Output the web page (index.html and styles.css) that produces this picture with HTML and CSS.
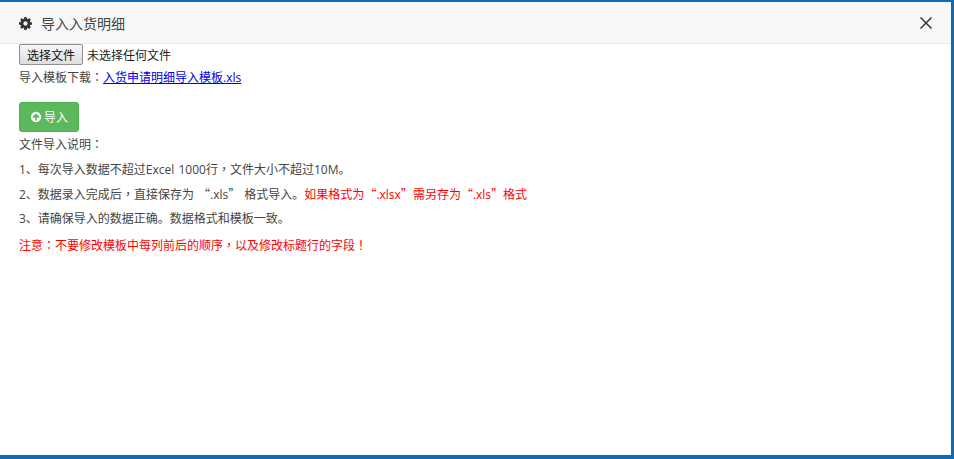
FILE: index.html
```html
<!DOCTYPE html>
<html>
<head>
<meta http-equiv="Content-Type" content="text/html; charset=utf-8">
<title>导入入货明细</title>
<link rel="stylesheet" href="styles.css">
</head>
<body>
<div class="modal">
    <div class="modal-header">
        <svg class="icon-cog" viewBox="0 0 1792 1792"><path fill="#333" d="M1152 896q0-106-75-181t-181-75-181 75-75 181 75 181 181 75 181-75 75-181zm512-109v222q0 12-8 23t-20 13l-185 28q-19 54-39 91 35 50 107 138 10 12 10 25t-9 23q-27 37-99 108t-94 71q-12 0-26-9l-138-108q-44 23-91 38-16 136-29 186-7 28-36 28h-222q-14 0-24.500-8.500t-11.500-21.500l-28-184q-49-16-90-37l-141 107q-10 9-25 9-14 0-25-11-126-114-165-168-7-10-7-23 0-12 8-23 15-21 51-66.500t54-70.500q-27-50-41-99l-183-27q-13-2-21-12.500t-8-23.500v-222q0-12 8-23t19-13l186-28q14-46 39-92-40-57-107-138-10-12-10-24 0-10 9-23 26-36 98.500-107.500t94.500-71.500q13 0 26 10l138 107q44-23 91-38 16-136 29-186 7-28 36-28h222q14 0 24.500 8.500t11.500 21.500l28 184q49 16 90 37l142-107q9-9 24-9 13 0 25 10 129 119 165 170 7 8 7 22 0 12-8 23-15 21-51 66.500t-54 70.500q26 50 41 98l183 28q13 2 21 12.500t8 23.500z"/></svg>
        <span class="modal-title">导入入货明细</span>
        <svg class="icon-close" viewBox="0 0 12 12"><path stroke="#333344" stroke-width="1.500" fill="none" d="M.5.5l11 11M11.500.5l-11 11"/></svg>
    </div>
    <div class="modal-body">
        <div class="file-row">
            <button class="file-btn">选择文件</button>
            <span class="file-name">未选择任何文件</span>
        </div>
        <div class="template-row">导入模板下载<span class="pun">：</span><a href="#">入货申请明细导入模板.xls</a></div>
        <button class="btn-import">
            <svg class="icon-up" viewBox="0 0 1792 1792"><path fill="#fff" d="M1412 897q0-27-18-45l-91-91-362-362q-18-18-45-18t-45 18l-362 362-91 91q-18 18-18 45t18 45l91 91q18 18 45 18t45-18l189-189v502q0 26 19 45t45 19h128q26 0 45-19t19-45v-502l189 189q19 19 45 19t45-19l91-91q18-18 18-45zm252-1q0 209-103 385.500t-279.500 279.500-385.500 103-385.500-103-279.500-279.500-103-385.500 103-385.500 279.500-279.500 385.500-103 385.500 103 279.500 279.500 103 385.500z"/></svg>
            导入
        </button>
        <p class="first">文件导入说明<span class="pun">：</span></p>
        <p>1、每次导入数据不超过Excel 1000行<span class="pun">，</span>文件大小不超过10M。</p>
        <p>2、数据录入完成后<span class="pun">，</span>直接保存为 <span class="quote">“</span>.xls<span class="quote">”</span> 格式导入。<span class="red">如果格式为<span class="quote">“</span>.xlsx<span class="quote">”</span>需另存为<span class="quote">“</span>.xls<span class="quote">”</span>格式</span></p>
        <p>3、请确保导入的数据正确。数据格式和模板一致。</p>
        <p class="red note">注意<span class="pun">：</span>不要修改模板中每列前后的顺序<span class="pun">，</span>以及修改标题行的字段<span class="pun">！</span></p>
    </div>
</div>
</body>
</html>
```
FILE: styles.css
```css
html, body {
    margin: 0;
    padding: 0;
    height: 100%;
    overflow: hidden;
}
body {
    font-family: "Open Sans", "Noto Sans CJK SC", sans-serif;
    font-size: 12px;
    color: #444;
    background: #fff;
}
.modal {
    box-sizing: border-box;
    width: 954px;
    height: 459px;
    border-top: 2px solid #0a6ebd;
    border-right: 3px solid #0a6ebd;
    border-bottom: 4px solid #0a6ebd;
}
.modal-header {
    box-sizing: border-box;
    height: 42px;
    display: flex;
    align-items: center;
    padding: 0 19px;
    background: #f7f7f7;
    border-bottom: 1px solid #e9e9e9;
}
.icon-cog {
    width: 15px;
    height: 15px;
    margin: 1px 8px 0 -1px;
}
.modal-title {
    font-size: 14px;
    color: #444;
    flex: 1;
}
.icon-close {
    width: 12px;
    height: 12px;
    margin: 1px 0 0 0;
}
.modal-body {
    padding: 0 19px;
}
.file-row {
    display: flex;
    align-items: center;
    height: 21px;
    color: #222;
}
.file-btn {
    box-sizing: border-box;
    width: 64px;
    height: 21px;
    padding: 0;
    margin-right: 4px;
    font: 12px "Noto Sans CJK SC", sans-serif;
    color: #111;
    background: linear-gradient(#f6f6f6, #dedede);
    border: 1px solid #8f8f8f;
    border-radius: 2px;
}
.template-row {
    height: 17px;
    line-height: 17px;
    margin-top: 3px;
}
.template-row a {
    color: #00e;
}
.btn-import {
    display: flex;
    align-items: center;
    justify-content: center;
    gap: 2px;
    box-sizing: border-box;
    width: 60px;
    height: 30px;
    margin-top: 17px;
    padding: 0;
    font: 12px "Open Sans", "Noto Sans CJK SC", sans-serif;
    color: #fff;
    background: #5cb85c;
    border: 1px solid #4cae4c;
    border-radius: 3px;
}
.icon-up {
    width: 12px;
    height: 12px;
}
p {
    height: 17px;
    margin: 8px 0 0;
    line-height: 17px;
    word-spacing: 1px;
}
p.first {
    margin-top: 3px;
}
p.note {
    margin-top: 9px;
}
.red {
    color: #f00;
}
.pun {
    font-family: "Noto Sans CJK TC", sans-serif;
}
.quote {
    font-family: "Noto Sans CJK SC", sans-serif;
}
```
